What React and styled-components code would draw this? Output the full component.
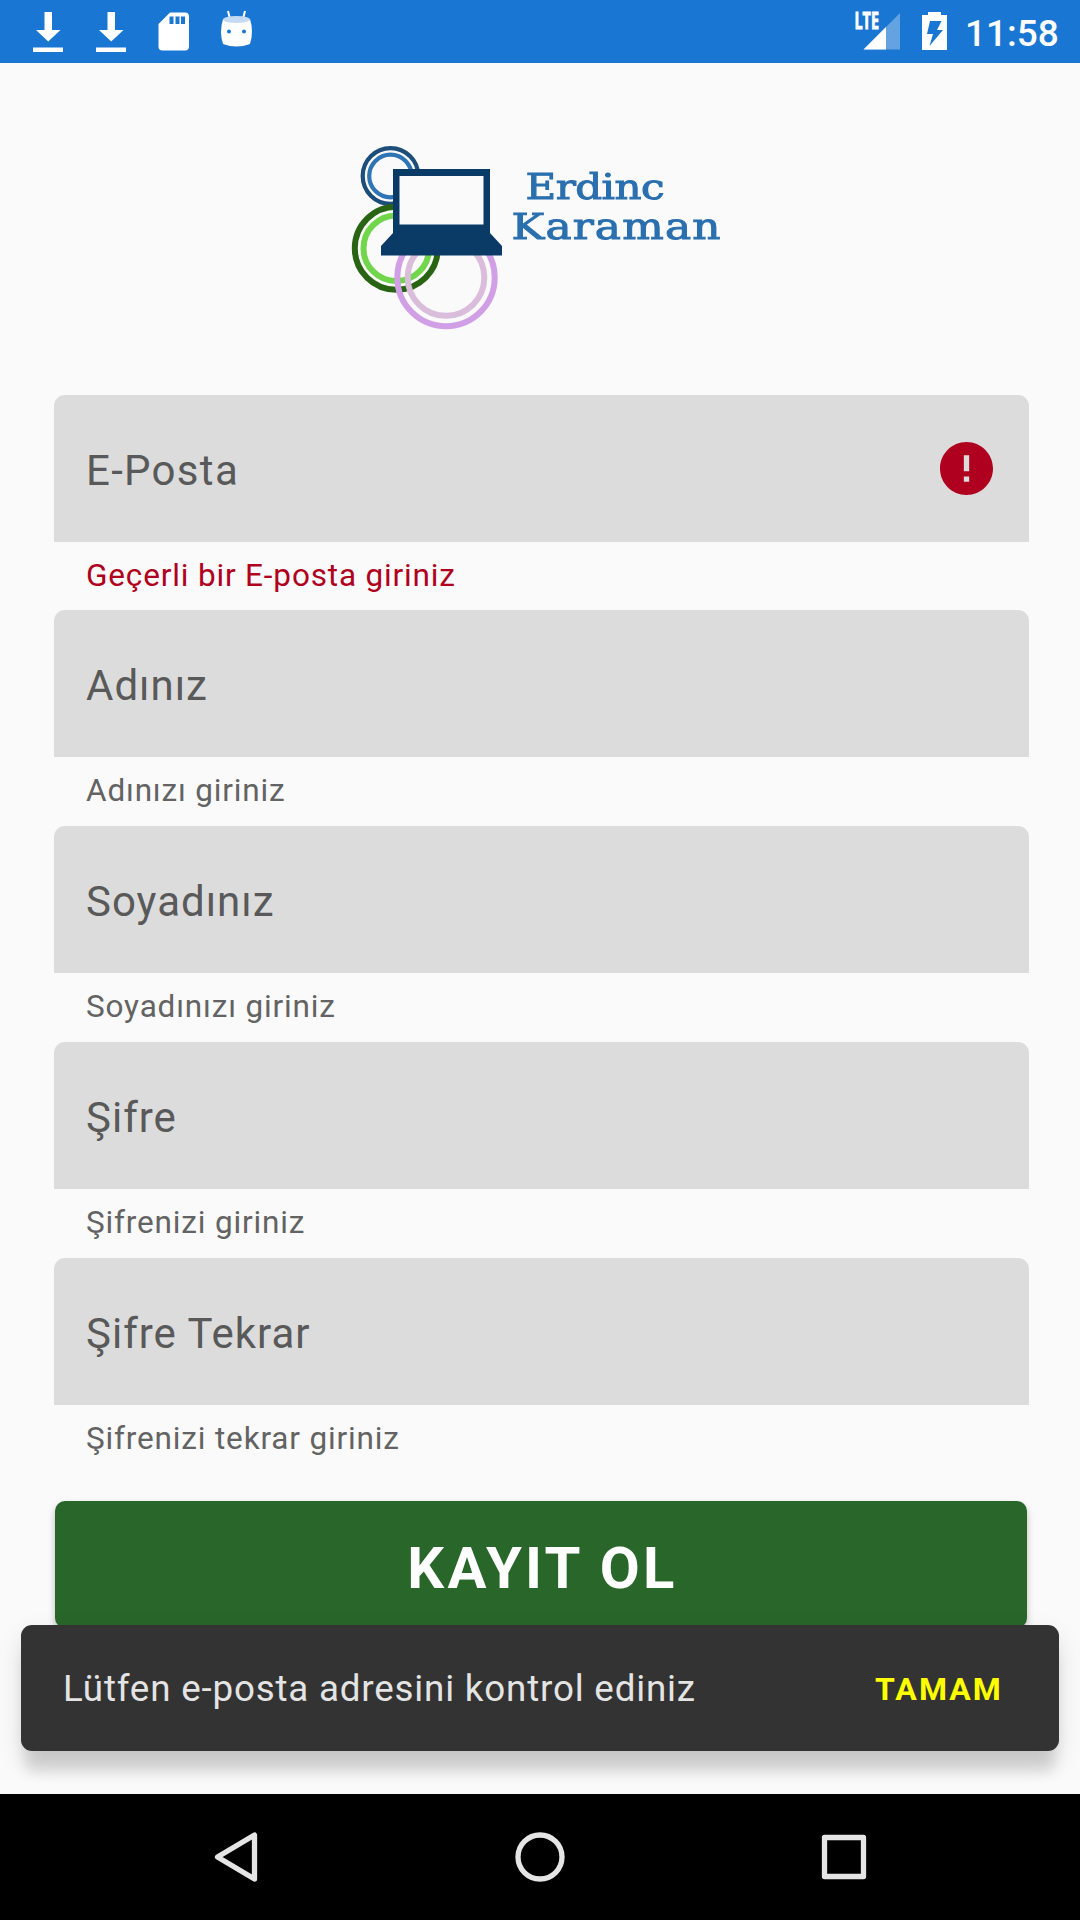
import React from "react";
import styled, { createGlobalStyle } from "styled-components";

const GlobalStyle = createGlobalStyle`
  * { box-sizing: border-box; }
  body { margin: 0; background: #fafafa; }
`;

const Screen = styled.div`
  position: relative;
  display: flex;
  flex-direction: column;
  width: 1080px;
  height: 1920px;
  overflow: hidden;
  background: #fafafa;
  font-family: Roboto, sans-serif;
`;

const StatusBar = styled.header`
  display: flex;
  justify-content: space-between;
  height: 63px;
  flex: none;
  background: #1976d2;
`;

const StatusGroup = styled.div`
  display: flex;
  align-items: center;
`;

const StatusIcon = styled.svg`
  display: block;
  width: ${(p) => p.$w}px;
  height: 63px;
  flex: none;
  overflow: visible;
  fill: #fff;
`;

const LteText = styled.text`
  font: 700 22.5px "Open Sans", sans-serif;
  fill: #fff;
  stroke: #fff;
  stroke-width: 0.9px;
`;

const Clock = styled.span`
  width: 115px;
  font-size: 37px;
  font-weight: 500;
  line-height: 63px;
  padding-top: 4px;
  color: #fff;
`;

const Main = styled.main`
  display: flex;
  flex-direction: column;
  flex: 1;
  padding: 0 51px 0 54px;
`;

const LogoRow = styled.div`
  display: flex;
  flex: none;
  height: 332px;
  padding: 67px 0 0 286px;
`;

const Logo = styled.svg`
  display: block;
  width: 400px;
  height: 220px;
  filter: blur(0.7px);
`;

const LogoText = styled.text`
  font: 400 34.5px "DejaVu Serif", serif;
  fill: #2a6fae;
  stroke: #2a6fae;
  stroke-width: 1px;
`;

const Field = styled.div`
  flex: none;
  height: ${(p) => p.$h}px;
`;

const FieldBox = styled.div`
  display: flex;
  align-items: center;
  justify-content: space-between;
  height: 147px;
  padding: 4px 36px 0 32px;
  border-radius: 11px 11px 0 0;
  background: #dcdcdc;
`;

const FieldLabel = styled.span`
  font-size: 42px;
  line-height: 50px;
  letter-spacing: ${(p) => p.$spacing || 1}px;
  color: #595959;
`;

const ErrorIcon = styled.svg`
  display: block;
  width: 53px;
  height: 53px;
  margin-top: -5px;
`;

const Helper = styled.div`
  padding: 15px 0 0 32px;
  font-size: 31.5px;
  line-height: 37px;
  letter-spacing: 0.84px;
  color: ${(p) => (p.$error ? "#b00020" : "#636363")};
`;

const SubmitButton = styled.button`
  flex: none;
  width: 972px;
  height: 127px;
  margin: 28px 0 0 1px;
  padding: 7px 0 0;
  border: 0;
  border-radius: 10px;
  background: #286629;
  box-shadow: 0 4px 7px rgba(0, 0, 0, 0.25);
  font: 700 58px/64px Roboto, sans-serif;
  letter-spacing: 3.25px;
  text-indent: 3px;
  color: #fff;
`;

const Snackbar = styled.div`
  position: absolute;
  left: 21px;
  top: 1625px;
  display: flex;
  align-items: center;
  justify-content: space-between;
  width: 1038px;
  height: 126px;
  padding: 0 56px 0 42px;
  border-radius: 11px;
  background: #333;
  box-shadow: 0 25px 14px -4px rgba(0, 0, 0, 0.12), 0 10px 24px rgba(0, 0, 0, 0.12);
`;

const SnackText = styled.span`
  font-size: 36.75px;
  letter-spacing: 0.81px;
  color: #e4e4e4;
`;

const SnackAction = styled.button`
  padding: 1px 0 0;
  border: 0;
  background: none;
  font: 700 32px Roboto, sans-serif;
  letter-spacing: 2.1px;
  color: #ff0;
`;

const NavBar = styled.nav`
  display: flex;
  flex: none;
  align-items: center;
  justify-content: space-between;
  height: 126px;
  padding: 0 205px;
  background: #000;
`;

const NavIcon = styled.svg`
  display: block;
  width: 62px;
  height: 62px;
  fill: none;
  stroke: #e5e5e5;
  stroke-width: 5.3;
  stroke-linejoin: round;
`;

const fields = [
  { label: "E-Posta", helper: "Geçerli bir E-posta giriniz", error: true, h: 215, spacing: 1.3 },
  { label: "Adınız", helper: "Adınızı giriniz", h: 216 },
  { label: "Soyadınız", helper: "Soyadınızı giriniz", h: 216 },
  { label: "Şifre", helper: "Şifrenizi giriniz", h: 216 },
  { label: "Şifre Tekrar", helper: "Şifrenizi tekrar giriniz", h: 215 },
];

function Download() {
  return (
    <StatusIcon $w={63} viewBox="0 0 63 63">
      <path d="M28.5 12h7.500v18h8.500L32.200 41.500 20 30h8.500zM17 47.500h30v4.500H17z" transform="translate(16 0)" />
    </StatusIcon>
  );
}

function BrandLogo() {
  return (
    <Logo viewBox="340 130 400 220">
      <g fill="none">
        <circle cx="390.500" cy="176" r="27.800" stroke="#1d4e7a" strokeWidth="4.200" />
        <circle cx="390.500" cy="176" r="21.300" stroke="#2f75b5" strokeWidth="4.200" />
        <circle cx="396.300" cy="248.300" r="41.500" stroke="#286414" strokeWidth="6" />
        <circle cx="396.300" cy="248.300" r="32.800" stroke="#72d64d" strokeWidth="6" />
        <circle cx="446" cy="277.500" r="38.300" stroke="#d9bddb" strokeWidth="6" />
        <circle cx="446" cy="277.500" r="48.700" stroke="#d19fe6" strokeWidth="6" />
      </g>
      <path d="M393 169h97v64l12 13v9.500H381V246l12-13z" fill="#0a3b66" />
      <path d="M399.500 176h84v48.500h-84z" fill="#fafafa" />
      <g transform="translate(525.5 198.500) scale(1.22 1)">
        <LogoText textLength="114" lengthAdjust="spacing">Erdinc</LogoText>
      </g>
      <g transform="translate(511.5 238.500) scale(1.27 1)">
        <LogoText textLength="164.500" lengthAdjust="spacing">Karaman</LogoText>
      </g>
    </Logo>
  );
}

export default function App() {
  return (
    <Screen>
      <GlobalStyle />
      <StatusBar>
        <StatusGroup>
          <Download />
          <Download />
          <StatusIcon $w={63} viewBox="126 0 63 63">
            <path
              fillRule="evenodd"
              d="M170 12.500h15q4 0 4 4V46.500q0 4-4 4h-22.500q-4 0-4-4V24zM169.500 16.500v7.500h4v-7.500zm6 0v7.500h4v-7.500zm5.500 0v7.500h4v-7.500z"
            />
          </StatusIcon>
          <StatusIcon $w={63} viewBox="189 0 63 63">
            <path d="M228 11l2 8M245 11l-2 8" stroke="#fff" strokeWidth="2" />
            <path d="M223 19q14 3 27 0 4 12 0 25-13.500 5-27 0-4-12 0-25z" />
            <ellipse cx="236.500" cy="19.500" rx="13.500" ry="3.500" fill="#c5dbf3" />
            <circle cx="229" cy="31.500" r="2" fill="#1976d2" />
            <circle cx="244" cy="31.500" r="2" fill="#1976d2" />
          </StatusIcon>
        </StatusGroup>
        <StatusGroup>
          <StatusIcon $w={60} viewBox="851 0 60 63">
            <path d="M900 13v36.500h-36.500z" fillOpacity=".33" />
            <path d="M886 27v22.500h-22.500z" />
            <LteText x="854.500" y="29" textLength="24.500" lengthAdjust="spacingAndGlyphs">LTE</LteText>
          </StatusIcon>
          <StatusIcon $w={54} viewBox="911 0 54 63">
            <path fillRule="evenodd" d="M922 15h6v-3h13v3h6v35h-25zM930 21l-3 13h6l-3.500 12L943 30h-6l4.500-9z" />
          </StatusIcon>
          <Clock>11:58</Clock>
        </StatusGroup>
      </StatusBar>
      <Main>
        <LogoRow>
          <BrandLogo />
        </LogoRow>
        {fields.map((f) => (
          <Field key={f.label} $h={f.h}>
            <FieldBox>
              <FieldLabel $spacing={f.spacing}>{f.label}</FieldLabel>
              {f.error && (
                <ErrorIcon viewBox="2 2 20 20">
                  <path
                    fill="#b00020"
                    d="M12 2C6.480 2 2 6.480 2 12s4.480 10 10 10 10-4.480 10-10S17.520 2 12 2zm1 15h-2v-2h2v2zm0-4h-2V7h2v6z"
                  />
                </ErrorIcon>
              )}
            </FieldBox>
            <Helper $error={f.error}>{f.helper}</Helper>
          </Field>
        ))}
        <SubmitButton>KAYIT OL</SubmitButton>
      </Main>
      <NavBar>
        <NavIcon viewBox="205 1826 62 62">
          <path d="M254.500 1835v44l-37-22z" />
        </NavIcon>
        <NavIcon viewBox="509 1826 62 62">
          <circle cx="540" cy="1857" r="22" />
        </NavIcon>
        <NavIcon viewBox="813 1826 62 62">
          <path d="M824.500 1837.500h39v39h-39z" />
        </NavIcon>
      </NavBar>
      <Snackbar>
        <SnackText>Lütfen e-posta adresini kontrol ediniz</SnackText>
        <SnackAction>TAMAM</SnackAction>
      </Snackbar>
    </Screen>
  );
}
